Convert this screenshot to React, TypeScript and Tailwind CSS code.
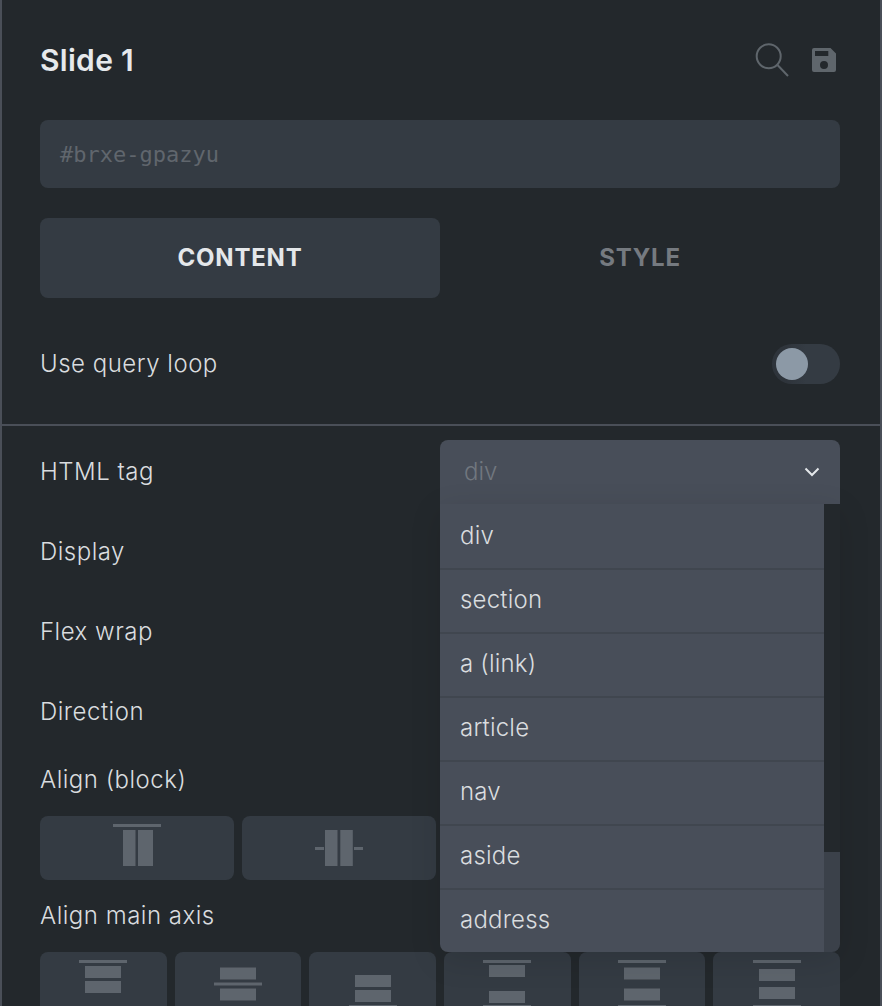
const options = ['div', 'section', 'a (link)', 'article', 'nav', 'aside', 'address'];

function SearchIcon() {
  return (
    <svg width="34" height="34" viewBox="0 0 34 34" fill="none" stroke="#5f666c" strokeWidth="2">
      <circle cx="13.7" cy="13.3" r="12" />
      <path d="M22.5 22 L33 33" />
    </svg>
  );
}

function SaveIcon() {
  return (
    <svg width="24" height="24" viewBox="0 0 24 24" fill="#5f666c">
      <path
        fillRule="evenodd"
        d="M2 0H18.5L24 5.5V22a2 2 0 0 1-2 2H2a2 2 0 0 1-2-2V2a2 2 0 0 1 2-2ZM3 3V8H16.3V3ZM12 13a4 4 0 1 0 0 8 4 4 0 0 0 0-8Z"
      />
    </svg>
  );
}

function Chevron() {
  return (
    <svg width="16" height="10" viewBox="0 0 16 10" fill="none" stroke="#e4e7ea" strokeWidth="2">
      <path d="M1.5 1.5 L8 8 L14.5 1.5" />
    </svg>
  );
}

// rects are [x, y, w, h] inside a 48px box
function BarIcon({ rects }: { rects: number[][] }) {
  return (
    <svg width="48" height="48" viewBox="0 0 48 48" fill="#5e656d">
      {rects.map((r, i) => (
        <rect key={i} x={r[0]} y={r[1]} width={r[2]} height={r[3]} />
      ))}
    </svg>
  );
}

const blockIcons = [
  [[0, 0, 48, 3], [10, 6, 12.5, 36], [25, 6, 15, 36]],
  [[0, 23, 9, 3], [10, 6, 12.5, 36], [25.3, 6, 12.5, 36], [39, 23, 9, 3]],
  [[0, 45, 48, 3], [10, 6, 12.5, 36], [25, 6, 12.5, 36]],
  [[10, 6, 12.5, 36], [25, 6, 12.5, 36]],
];

const mainAxisIcons = [
  [[0, 0, 48, 3], [6, 6, 36, 12], [6, 21, 36, 12]],
  [[6, 7.5, 36, 12], [0, 22.5, 48, 3], [6, 28.5, 36, 12]],
  [[6, 15, 36, 12], [6, 30, 36, 12], [0, 45, 48, 3]],
  [[0, 0, 48, 3], [6, 5, 36, 12], [6, 31, 36, 12], [0, 45, 48, 3]],
  [[0, 0, 48, 3], [6, 7.5, 36, 12], [6, 28.5, 36, 12], [0, 45, 48, 3]],
  [[0, 0, 48, 3], [6, 9, 36, 12], [6, 27, 36, 12], [0, 45, 48, 3]],
];

function Label({ children }: { children: string }) {
  return <span className="text-[24px] font-[350] leading-[28px] tracking-[0.5px] text-[#d9dcdf]">{children}</span>;
}

function HtmlTagSelect() {
  return (
    <div className="relative h-[64px] w-[400px]">
      <div className="flex h-full items-center justify-between rounded-t-[8px] bg-[#484e59] pl-[24px] pr-[20px]">
        <span className="text-[24px] font-[350] text-[#71777f]">div</span>
        <Chevron />
      </div>
      <div className="absolute left-0 top-full z-10 flex w-full overflow-hidden rounded-b-[8px] shadow-[0_8px_32px_rgba(0,0,0,0.12)]">
        <ul className="w-[384px]">
          {options.map((o, i) => (
            <li
              key={o}
              className={
                i > 0
                  ? 'flex h-[64px] items-center bg-[#484e59] pl-[20px] text-[24px] font-[350] tracking-[0.2px] text-[#d9dcdf] shadow-[inset_0_2px_0_#40464f]'
                  : 'flex h-[64px] items-center bg-[#484e59] pl-[20px] text-[24px] font-[350] tracking-[0.2px] text-[#d9dcdf]'
              }
            >
              {o}
            </li>
          ))}
        </ul>
        <div className="flex w-[16px] flex-col justify-end bg-[#23282c]">
          <div className="h-[100px] bg-[#3b414a]" />
        </div>
      </div>
    </div>
  );
}

export default function App() {
  return (
    <div className="h-[1006px] w-[882px] overflow-hidden border-x-2 border-[#4a4f58] bg-[#23282c] font-['Inter',sans-serif]">
      <div className="pl-[38px] pr-[40px]">
        <header className="flex h-[120px] items-center justify-between">
          <h1 className="text-[30px] font-semibold tracking-[0.3px] text-[#e6e9ec]">Slide 1</h1>
          <div className="flex items-center gap-[23px] pr-[4px]">
            <SearchIcon />
            <SaveIcon />
          </div>
        </header>

        <div className="flex h-[68px] items-center rounded-[8px] bg-[#343b43] pl-[20px] font-['DejaVu_Sans_Mono',monospace] text-[22px] text-[#60666d]">
          #brxe-gpazyu
        </div>

        <div className="mt-[30px] flex h-[80px]">
          <button className="h-full w-[400px] rounded-[8px] bg-[#343b43] text-[24px] font-bold tracking-[0.8px] text-[#e4e7ea]">
            CONTENT
          </button>
          <button className="h-full w-[400px] text-[24px] font-bold tracking-[0.8px] text-[#757a80]">STYLE</button>
        </div>

        <div className="mt-[46px] mb-[40px] flex h-[40px] items-center justify-between">
          <Label>Use query loop</Label>
          <div className="flex h-[40px] w-[68px] items-center rounded-full bg-[linear-gradient(90deg,#2e343b_0%,#2e343b_20%,#343b43_50%)] pl-[4px]">
            <div className="h-[32px] w-[32px] rounded-full bg-[#8c99a6]" />
          </div>
        </div>
      </div>

      <div className="h-[2px] bg-[#4a4f58]" />

      <div className="pl-[38px] pr-[40px] pt-[6px]">
        <div className="flex h-[80px] items-center justify-between">
          <Label>HTML tag</Label>
          <HtmlTagSelect />
        </div>
        <div className="flex h-[80px] items-center">
          <Label>Display</Label>
        </div>
        <div className="flex h-[80px] items-center">
          <Label>Flex wrap</Label>
        </div>
        <div className="flex h-[80px] items-center">
          <Label>Direction</Label>
        </div>

        <div className="mt-[14px] h-[28px]">
          <Label>Align (block)</Label>
        </div>
        <div className="mt-[22px] grid grid-cols-4 gap-[8px]">
          {blockIcons.map((rects, i) => (
            <div key={i} className="flex h-[64px] items-center justify-center rounded-[8px] bg-[#343b43]">
              <BarIcon rects={rects} />
            </div>
          ))}
        </div>

        <div className="mt-[22px] h-[28px]">
          <Label>Align main axis</Label>
        </div>
        <div className="mt-[22px] grid grid-cols-6 gap-[8px]">
          {mainAxisIcons.map((rects, i) => (
            <div key={i} className="flex h-[64px] items-center justify-center rounded-[8px] bg-[#343b43]">
              <BarIcon rects={rects} />
            </div>
          ))}
        </div>
      </div>
    </div>
  );
}
